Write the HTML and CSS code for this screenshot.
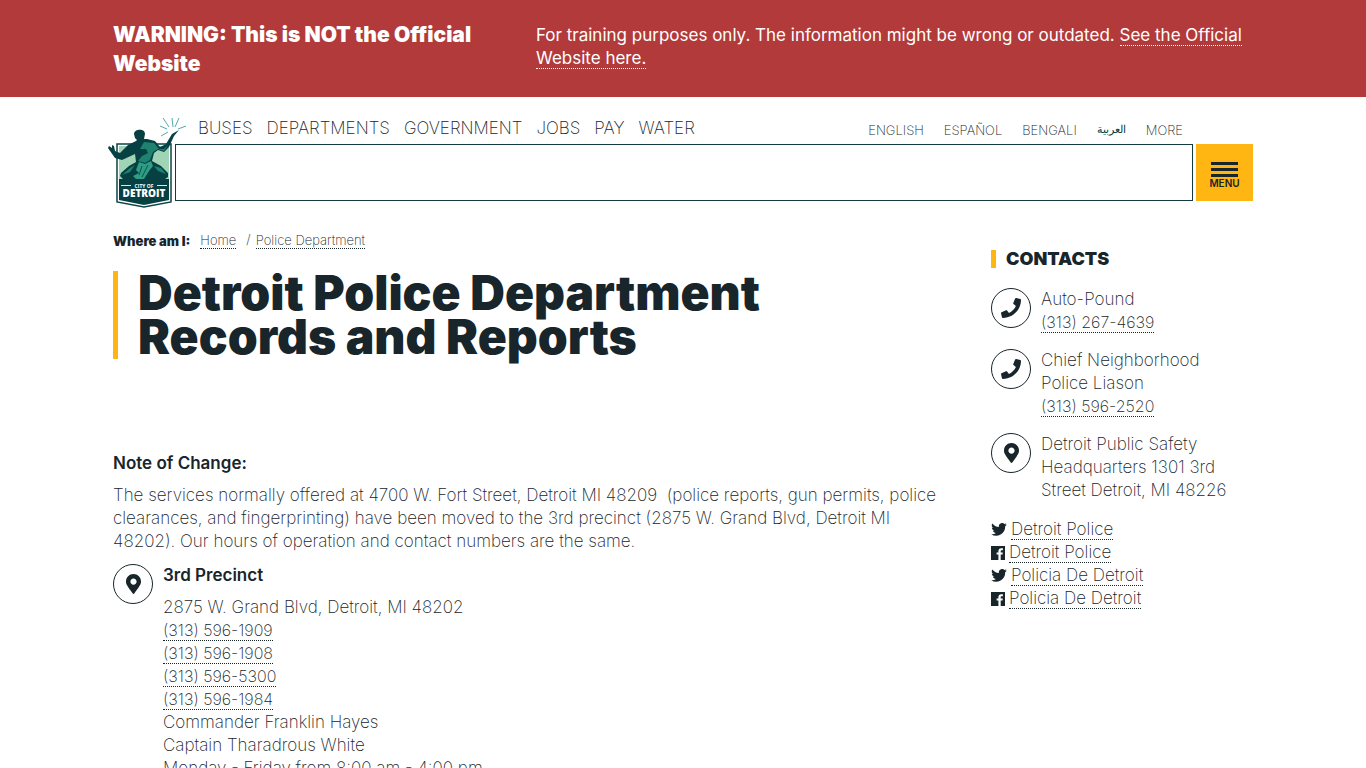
FILE: index.html
```html
<!DOCTYPE html>
<html lang="en">
<head>
<meta charset="utf-8">
<meta name="viewport" content="width=device-width, initial-scale=1">
<title>Detroit Police Department Records and Reports</title>
<link rel="stylesheet" href="styles.css">
</head>
<body>
<svg class="sprite" aria-hidden="true">
  <symbol id="phone" viewBox="0 0 512 512"><path d="M493.4 24.600l-104-24c-11.300-2.600-22.900 3.300-27.500 13.900l-48 112c-4.200 9.800-1.400 21.300 6.900 28l60.600 49.600c-36 76.700-98.900 140.500-177.200 177.200l-49.600-60.600c-6.800-8.300-18.200-11.100-28-6.900l-112 48C3.900 366.500-2 378.100.6 389.400l24 104C27.100 504.200 36.700 512 48 512c256.100 0 464-207.500 464-464 0-11.200-7.700-20.900-18.600-23.400z"/></symbol>
  <symbol id="pin" viewBox="0 0 384 512"><path d="M172.300 501.700C27 291 0 269.400 0 192 0 86 86 0 192 0s192 86 192 192c0 77.400-27 99-172.300 309.700-9.500 13.800-29.900 13.800-39.400 0zM192 272c44.200 0 80-35.800 80-80s-35.800-80-80-80-80 35.800-80 80 35.800 80 80 80z"/></symbol>
  <symbol id="twitter" viewBox="0 0 24 20"><path d="M24 2.400c-.9.400-1.800.7-2.800.8 1-.6 1.800-1.600 2.200-2.700-1 .6-2 1-3.100 1.200a4.900 4.900 0 0 0-8.400 4.500C7.700 6 4.100 4 1.700.9a4.900 4.900 0 0 0 1.500 6.600C2.400 7.500 1.600 7.300 1 6.900v.1c0 2.300 1.600 4.300 3.900 4.800-.7.200-1.500.2-2.200.1.600 2 2.400 3.400 4.600 3.400A9.900 9.900 0 0 1 0 17.300 14 14 0 0 0 21.500 4.900c1-.7 1.800-1.500 2.500-2.500z"/></symbol>
  <symbol id="facebook" viewBox="0 0 14 14"><path fill-rule="evenodd" d="M0 0h14v14h-4.300V8.600h1.800l.3-2.100H9.700V5.200c0-.6.200-1 1-1h1.200V2.300c-.2 0-.9-.1-1.700-.1-1.700 0-2.800 1-2.800 2.900v1.400H5.600v2.100h1.800V14H0z"/></symbol>
</svg>

<div class="warning">
  <div class="container warning-row">
    <h2 class="warning-title">WARNING: This is NOT the Official Website</h2>
    <p class="warning-text">For training purposes only. The information might be wrong or outdated. <a href="#">See the Official Website here.</a></p>
  </div>
</div>

<header class="container header">
  <a class="logo" href="#" aria-label="City of Detroit">
    <svg class="logo-art" viewBox="0 0 80 92">
      <path d="M9 28H63V86L36 91L9 86Z" fill="#fff" stroke="#0a4445" stroke-width="1.500"/>
      <path d="M11 30H61V64H11Z" fill="#9fd5b5"/>
      <path d="M11 63H61V84L36 89L11 84Z" fill="#064043"/>
      <!-- figure silhouette -->
      <path d="M1 30L4 32L4 29L6 30L7 35L12 37L20 29L28 25L29 24L27 22L26 18C26 13 37 12 37 18L36 23L39 23L47 25L52 31L58 28L64 18L71 14L66 20L61 31L56 36L50 34L46 37L44 45L53 50L60 57V61L57 63H15L12 60L13 57L21 50L28 46L27 38L14 44L7 42L0 32Z" fill="#064043"/>
      <!-- lit torso and arm -->
      <path d="M36 26L46 27L51 33L56 33L60 29L56 35L50 33L45 36L42 44L37 47L30 45L34 40L40 37L38 33L32 33Z" fill="#1f816f"/>
      <path d="M31 46L37 48L43 45L45 50L41 55L36 63H28L25 60L31 57L28 54Z" fill="#2f9c84"/>
      <path d="M14 59L22 52L27 49L22 56ZM46 50L53 52L58 58L50 55Z" fill="#1f816f"/>
      <path d="M34 50L31 59M40 49L34 61" stroke="#0a5351" stroke-width="1"/>
      <path d="M52 10L59 13M55 2L61 11M64 2L65 11M71 2L67 11M78 10L70 13M53 20L60 16" stroke="#55a9a8" stroke-width="1"/>
      <path d="M13 69.500H23M49 69.500H59" stroke="#dbe9e5" stroke-width="1"/>
      <text class="logo-small" x="36" y="71.500" text-anchor="middle">CITY OF</text>
      <text class="logo-big" x="36" y="81" text-anchor="middle">DETROIT</text>
    </svg>
  </a>
  <div class="header-main">
    <div class="nav-row">
      <nav class="nav" aria-label="Main">
        <a href="#">BUSES</a><a href="#">DEPARTMENTS</a><a href="#">GOVERNMENT</a><a href="#">JOBS</a><a href="#">PAY</a><a href="#">WATER</a>
      </nav>
      <nav class="languages" aria-label="Languages">
        <a href="#">ENGLISH</a><a href="#">ESPAÑOL</a><a href="#">BENGALI</a><a class="arabic" href="#" lang="ar">العربية</a><a href="#">MORE</a>
      </nav>
    </div>
    <div class="search-row">
      <input class="search" type="search" aria-label="Search">
      <button class="menu" type="button"><span class="bars"></span>MENU</button>
    </div>
  </div>
</header>

<div class="container page">
  <main class="content">
    <nav class="breadcrumb" aria-label="Breadcrumb">
      <strong>Where am I:</strong><a class="dotted" href="#">Home</a><span class="slash">/</span><a class="dotted" href="#">Police Department</a>
    </nav>
    <h1 class="title">Detroit Police Department<br>Records and Reports</h1>
    <h2 class="subhead">Note of Change:</h2>
    <p class="note">The services normally offered at 4700 W. Fort Street, Detroit MI 48209&nbsp; (police reports, gun permits, police<br>clearances, and fingerprinting) have been moved to the 3rd precinct (2875 W. Grand Blvd, Detroit MI<br>48202). Our hours of operation and contact numbers are the same.</p>
    <section class="entry">
      <span class="circle"><svg class="pin"><use href="#pin"/></svg></span>
      <div>
        <h2 class="subhead precinct">3rd Precinct</h2>
        <p>2875 W. Grand Blvd, Detroit, MI 48202<br>
        <a class="dotted phone-link" href="#">(313) 596-1909</a><br>
        <a class="dotted phone-link" href="#">(313) 596-1908</a><br>
        <a class="dotted phone-link" href="#">(313) 596-5300</a><br>
        <a class="dotted phone-link" href="#">(313) 596-1984</a><br>
        Commander Franklin Hayes<br>
        Captain Tharadrous White<br>
        Monday - Friday from 8:00 am - 4:00 pm</p>
      </div>
    </section>
  </main>

  <aside class="contacts">
    <h2 class="contacts-title">CONTACTS</h2>
    <div class="entry contact">
      <span class="circle"><svg class="phone"><use href="#phone"/></svg></span>
      <p>Auto-Pound<br><a class="dotted phone-link" href="#">(313) 267-4639</a></p>
    </div>
    <div class="entry contact">
      <span class="circle"><svg class="phone"><use href="#phone"/></svg></span>
      <p>Chief Neighborhood<br>Police Liason<br><a class="dotted phone-link" href="#">(313) 596-2520</a></p>
    </div>
    <div class="entry contact">
      <span class="circle"><svg class="pin"><use href="#pin"/></svg></span>
      <p>Detroit Public Safety<br>Headquarters 1301 3rd<br>Street Detroit, MI 48226</p>
    </div>
    <ul class="social">
      <li><svg class="twitter"><use href="#twitter"/></svg><a class="dotted" href="#">Detroit Police</a></li>
      <li><svg class="facebook"><use href="#facebook"/></svg><a class="dotted" href="#">Detroit Police</a></li>
      <li><svg class="twitter"><use href="#twitter"/></svg><a class="dotted" href="#">Policia De Detroit</a></li>
      <li><svg class="facebook"><use href="#facebook"/></svg><a class="dotted" href="#">Policia De Detroit</a></li>
    </ul>
  </aside>
</div>
</body>
</html>
```

FILE: styles.css
```css
* { box-sizing: border-box; }

html { overflow: hidden; }

body {
  margin: 0;
  height: 100vh;
  overflow: hidden;
  background: #fff;
  color: #18252a;
  font: 200 17px/23px Inter, "Liberation Sans", sans-serif;
}

h1, h2, p, ul { margin: 0; padding: 0; }
a { color: inherit; text-decoration: none; }
svg { fill: currentColor; }
.sprite { display: none; }

.container {
  max-width: 1170px;
  margin: 0 auto;
  padding: 0 15px;
}

.dotted, .warning-text a { border-bottom: 1px dotted currentColor; }
.phone-link { font-size: 16px; }

.warning { background: #b23a3b; color: #fff; }
.warning-row {
  display: grid;
  grid-template-columns: 383px 1fr;
  column-gap: 40px;
  padding-top: 20px;
  padding-bottom: 19px;
}
.warning-title { font-size: 21px; line-height: 29px; font-weight: 900; }
.warning-text { padding-top: 4px; font-weight: 400; }

.header { display: flex; padding-top: 19px; }
.logo { position: relative; flex: 0 0 62px; color: #064043; }
.logo-art {
  position: absolute;
  left: -5px;
  top: 0;
  width: 80px;
  height: 92px;
  overflow: visible;
}
.logo-small { font: 700 5px "Open Sans", sans-serif; fill: #fff; }
.logo-big { font: 800 10px "Open Sans", sans-serif; fill: #fff; }
.header-main { flex: 1; min-width: 0; }
.nav-row {
  display: flex;
  justify-content: space-between;
  height: 28px;
  padding: 1px 70px 0 23px;
}
.nav { display: flex; gap: 14px; }
.languages { display: flex; gap: 20px; font-size: 13px; line-height: 26px; }
.arabic { font-family: "DejaVu Sans", sans-serif; font-size: 11px; color: #064043; }
.search-row { display: flex; gap: 3px; }
.search {
  flex: 1;
  min-width: 0;
  height: 57px;
  padding: 0 16px;
  border: 1px solid #123c41;
  border-radius: 0;
  background: #fff;
  font: inherit;
}
.menu {
  display: flex;
  flex-direction: column;
  align-items: center;
  width: 57px;
  height: 57px;
  padding: 18px 0 0;
  border: 0;
  background: #ffb612;
  color: #18252a;
  font: 600 10px/13px Inter, sans-serif;
}
.bars {
  width: 27px;
  height: 15px;
  border-top: 3px solid;
  border-bottom: 3px solid;
  background: linear-gradient(currentColor, currentColor) center / 100% 3px no-repeat;
}

.page { display: grid; grid-template-columns: minmax(0, 1fr) 262px; column-gap: 34px; }
.content { padding-top: 28px; }
.breadcrumb { display: flex; align-items: center; font-size: 13px; line-height: 15px; height: 24px; }
.breadcrumb strong { margin-right: 10px; font-weight: 900; }
.slash { margin: 0 5px 4px 10px; }
.title {
  margin-top: 18px;
  padding-left: 20px;
  border-left: 5px solid #ffb612;
  font-size: 48px;
  line-height: 44px;
  font-weight: 900;
}
.subhead { margin-top: 93px; font-size: 17px; line-height: 23px; font-weight: 600; }
.note { margin-top: 9px; }
.entry { display: grid; grid-template-columns: 40px minmax(0, 1fr); column-gap: 10px; }
.content .entry { margin-top: 11px; }
.precinct { margin: 0 0 9px; }
.circle {
  display: grid;
  place-items: center;
  width: 40px;
  height: 40px;
  border: 1px solid;
  border-radius: 50%;
}
.phone { width: 20px; height: 20px; }
.pin { width: 15px; height: 20px; }

.contacts { padding-top: 49px; }
.contacts-title {
  margin-bottom: 20px;
  padding-left: 10px;
  border-left: 5px solid #ffb612;
  font-size: 18px;
  line-height: 18px;
  font-weight: 900;
}
.contact { margin-bottom: 15px; }
.social { margin-top: 16px; list-style: none; }
.social li { display: flex; align-items: center; height: 23px; gap: 4px; }
.social .dotted { line-height: 20px; }
.twitter { width: 16px; height: 13px; }
.facebook { width: 14px; height: 14px; }
```
